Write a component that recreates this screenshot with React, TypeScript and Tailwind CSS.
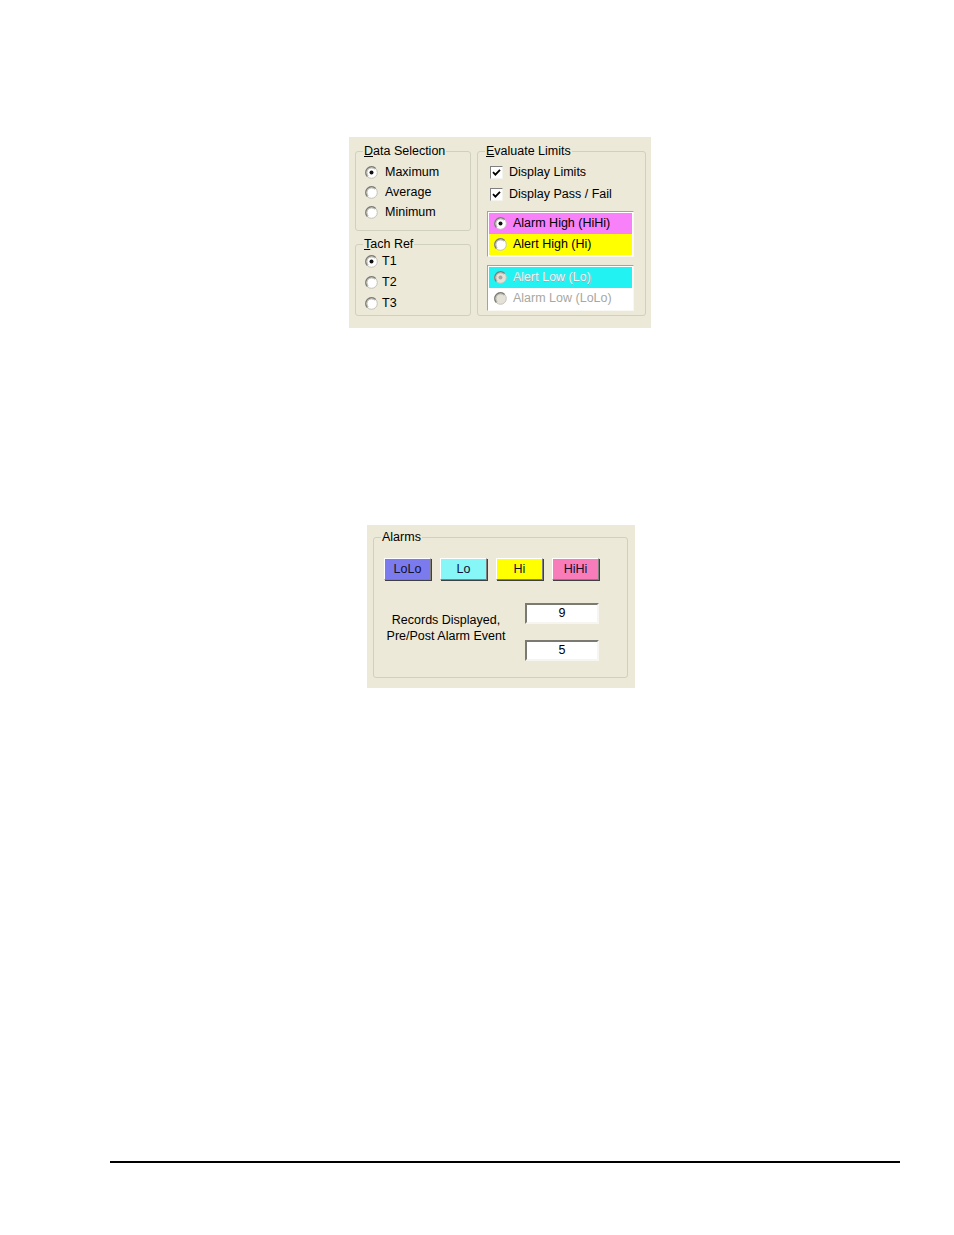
import type { ReactNode } from "react"

const font = "font-['Liberation_Sans',Arial,sans-serif]"

function Radio({ checked, disabled }: { checked?: boolean; disabled?: boolean }) {
    return (
        <svg width="13" height="13" viewBox="0 0 13 13" className="flex-shrink-0">
            <circle cx="6.5" cy="6.5" r="5.8" fill={disabled ? "#e4e2d8" : "#ffffff"} stroke="#c4c2b8" strokeWidth="1" />
            <path d="M2.4 10.6 A5.8 5.8 0 0 1 10.6 2.4" fill="none" stroke="#7c7c76" strokeWidth="1.4" />
            <path d="M3.3 9.7 A4.5 4.5 0 0 1 9.7 3.3" fill="none" stroke="#bdbbb0" strokeWidth="1" />
            {checked && <circle cx="6.5" cy="6.5" r="2" fill={disabled ? "#a8a8a0" : "#111111"} />}
        </svg>
    )
}

function Check() {
    return (
        <div className="w-[13px] h-[13px] bg-white border border-t-[#808080] border-l-[#808080] border-r-[#f4f3ee] border-b-[#f4f3ee] flex items-center justify-center flex-shrink-0">
            <svg width="9" height="9" viewBox="0 0 9 9">
                <path d="M1 4.2 L3.4 6.6 L8 1.8" fill="none" stroke="#000" strokeWidth="1.8" />
            </svg>
        </div>
    )
}

function Group({ title, className, children }: { title: ReactNode; className: string; children: ReactNode }) {
    return (
        <fieldset className={`border border-[#d0d0bf] rounded-[3px] ${className}`}>
            <legend className="ml-[7px] px-[1px] leading-[14px] text-black">{title}</legend>
            {children}
        </fieldset>
    )
}

function RadioRow({ label, checked, h, gap }: { label: string; checked?: boolean; h: string; gap: string }) {
    return (
        <div className={`flex items-center ${h} ${gap}`}>
            <Radio checked={checked} />
            <span>{label}</span>
        </div>
    )
}

function AlarmButton({ label, bg }: { label: string; bg: string }) {
    return (
        <div className={`w-[47px] h-[22px] ${bg} border border-t-white border-l-white border-r-[#808080] border-b-[#808080] shadow-[1px_1px_0_#404040] flex items-center justify-center text-[#101030]`}>
            {label}
        </div>
    )
}

function NumBox({ value }: { value: string }) {
    return (
        <div className="w-[74px] h-[21px] bg-white border-2 border-t-[#7a7a72] border-l-[#7a7a72] border-r-[#f6f5f0] border-b-[#f6f5f0] flex items-center justify-center">
            {value}
        </div>
    )
}

export default function App() {
    return (
        <div className={`w-[954px] h-[1235px] bg-white pt-[137px] text-[12.5px] text-black ${font}`}>
            {/* Panel 1: data selection / limits */}
            <div className="ml-[349px] w-[302px] h-[191px] bg-[#ece9d8] pt-[7px] pl-[6px] flex gap-[6px]">
                <div className="w-[116px] flex flex-col gap-[6px]">
                    <Group title={<><u>D</u>ata Selection</>} className="h-[87px]">
                        <div className="pl-[9px] pt-[4px]">
                            <RadioRow label="Maximum" checked h="h-[20px]" gap="gap-[7px]" />
                            <RadioRow label="Average" h="h-[20px]" gap="gap-[7px]" />
                            <RadioRow label="Minimum" h="h-[20px]" gap="gap-[7px]" />
                        </div>
                    </Group>
                    <Group title={<><u>T</u>ach Ref</>} className="h-[79px]">
                        <div className="pl-[9px]">
                            <RadioRow label="T1" checked h="h-[21px]" gap="gap-[4px]" />
                            <RadioRow label="T2" h="h-[21px]" gap="gap-[4px]" />
                            <RadioRow label="T3" h="h-[21px]" gap="gap-[4px]" />
                        </div>
                    </Group>
                </div>

                <Group title={<><u>E</u>valuate Limits</>} className="w-[169px] h-[172px]">
                    <div className="pl-[12px] pt-[3px]">
                        <div className="flex items-center gap-[6px] h-[22px]">
                            <Check />
                            <span>Display Limits</span>
                        </div>
                        <div className="flex items-center gap-[6px] h-[22px]">
                            <Check />
                            <span>Display Pass / Fail</span>
                        </div>
                    </div>

                    <div className="ml-[9px] mt-[6px] w-[147px] h-[46px] border border-t-[#a5a297] border-l-[#a5a297] border-r-[#f8f7f2] border-b-[#f8f7f2] p-[1px] bg-white">
                        <div className="h-[21px] bg-[#f880f8] flex items-center gap-[6px] pl-[5px]">
                            <Radio checked />
                            <span>Alarm High (HiHi)</span>
                        </div>
                        <div className="h-[21px] bg-[#ffff00] flex items-center gap-[6px] pl-[5px]">
                            <Radio />
                            <span>Alert High (Hi)</span>
                        </div>
                    </div>

                    <div className="ml-[9px] mt-[8px] w-[147px] h-[46px] border border-t-[#a5a297] border-l-[#a5a297] border-r-[#f8f7f2] border-b-[#f8f7f2] p-[1px] bg-white">
                        <div className="h-[21px] bg-[#22f2f2] flex items-center gap-[6px] pl-[5px] text-[#f4f4f4] [text-shadow:1px_1px_0_#8fb8b8]">
                            <Radio checked disabled />
                            <span>Alert Low (Lo)</span>
                        </div>
                        <div className="h-[21px] bg-white flex items-center gap-[6px] pl-[5px] text-[#a8a8a0]">
                            <Radio disabled />
                            <span>Alarm Low (LoLo)</span>
                        </div>
                    </div>
                </Group>
            </div>

            {/* Panel 2: alarms */}
            <div className="ml-[367px] mt-[197px] w-[268px] h-[163px] bg-[#ece9d8] pt-[5px] pl-[6px]">
                <Group title="Alarms" className="w-[255px] h-[148px]">
                    <div className="flex gap-[9px] pl-[10px] mt-[14px]">
                        <AlarmButton label="LoLo" bg="bg-[#7b7bee]" />
                        <AlarmButton label="Lo" bg="bg-[#86f6f6]" />
                        <AlarmButton label="Hi" bg="bg-[#ffff00]" />
                        <AlarmButton label="HiHi" bg="bg-[#f87cba]" />
                    </div>
                    <div className="flex mt-[23px]">
                        <div className="w-[144px] pt-[9px] text-center leading-[16px]">
                            <div>Records Displayed,</div>
                            <div>Pre/Post Alarm Event</div>
                        </div>
                        <div className="ml-[7px] flex flex-col gap-[16px]">
                            <NumBox value="9" />
                            <NumBox value="5" />
                        </div>
                    </div>
                </Group>
            </div>

            {/* Footer rule */}
            <div className="ml-[110px] mt-[473px] w-[790px] h-[2px] bg-black" />
        </div>
    )
}
